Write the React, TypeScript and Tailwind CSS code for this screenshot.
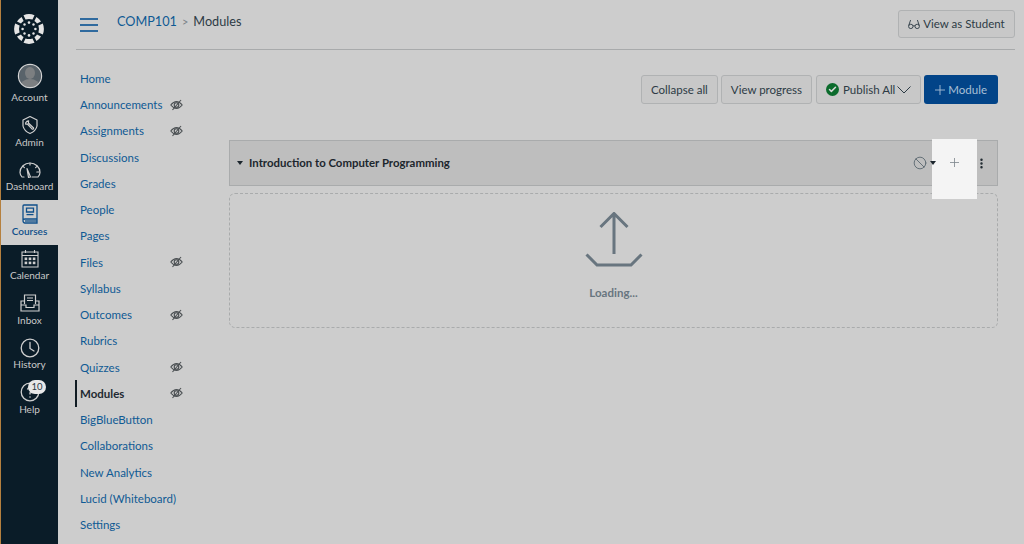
import { Ban, Check, EllipsisVertical } from "lucide-react";

const courseLinks = [
  { name: "Home" },
  { name: "Announcements", hidden: true },
  { name: "Assignments", hidden: true },
  { name: "Discussions" },
  { name: "Grades" },
  { name: "People" },
  { name: "Pages" },
  { name: "Files", hidden: true },
  { name: "Syllabus" },
  { name: "Outcomes", hidden: true },
  { name: "Rubrics" },
  { name: "Quizzes", hidden: true },
  { name: "Modules", hidden: true, active: true },
  { name: "BigBlueButton" },
  { name: "Collaborations" },
  { name: "New Analytics" },
  { name: "Lucid (Whiteboard)" },
  { name: "Settings" },
];

const CanvasLogo = () => (
  <svg width="32" height="32" viewBox="0 0 32 32" fill="#e4e4e4">
    <path d="M10.5 2.2 Q16 0 21.5 2.2 L19.5 6.6 Q16 5.4 12.5 6.6 Z" />
    <path d="M10.5 29.8 Q16 32 21.5 29.8 L19.5 25.4 Q16 26.6 12.5 25.4 Z" />
    <path d="M2.2 10.5 Q0 16 2.2 21.5 L6.6 19.5 Q5.4 16 6.6 12.5 Z" />
    <path d="M29.8 10.5 Q32 16 29.8 21.5 L25.4 19.5 Q26.6 16 25.4 12.5 Z" />
    <path d="M4 8.6 Q5.6 5.8 8.6 4 L10.6 8 Q8.8 9 8 10.6 Z" />
    <path d="M28 8.6 Q26.4 5.8 23.4 4 L21.4 8 Q23.2 9 24 10.6 Z" />
    <path d="M4 23.4 Q5.6 26.2 8.6 28 L10.6 24 Q8.8 23 8 21.4 Z" />
    <path d="M28 23.4 Q26.4 26.2 23.4 28 L21.4 24 Q23.2 23 24 21.4 Z" />
    <circle cx="16" cy="9.6" r="1.3" />
    <circle cx="16" cy="22.4" r="1.3" />
    <circle cx="9.6" cy="16" r="1.3" />
    <circle cx="22.4" cy="16" r="1.3" />
    <circle cx="11.5" cy="11.5" r="1.2" />
    <circle cx="20.5" cy="11.5" r="1.2" />
    <circle cx="11.5" cy="20.5" r="1.2" />
    <circle cx="20.5" cy="20.5" r="1.2" />
  </svg>
);

const AccountIcon = () => (
  <svg width="26" height="26" viewBox="0 0 26 26" className="shrink-0 mb-[10px]">
    <defs>
      <clipPath id="avatar">
        <circle cx="13" cy="13" r="11" />
      </clipPath>
    </defs>
    <circle cx="13" cy="13" r="11" fill="#59636a" />
    <g clipPath="url(#avatar)" fill="#7c7f81">
      <ellipse cx="13" cy="10" rx="5" ry="6" />
      <ellipse cx="13" cy="24" rx="10" ry="8" />
    </g>
    <circle cx="13" cy="13" r="11.6" fill="none" stroke="#d4d4d4" strokeWidth="1.2" />
  </svg>
);

const AdminIcon = () => (
  <svg width="20" height="20" viewBox="0 0 20 20" fill="none" stroke="#cfcfcf" strokeWidth="1.2" strokeLinejoin="round" className="shrink-0">
    <path d="M10 1.5 L17 5 V11 Q16 16 10 18.5 Q4 16 3 11 V5 Z" />
    <path d="M6.8 6.4 L8.6 5.8 L8.4 8 L13.6 13 Q13.6 14.4 12.2 14.2 L7.4 9 L5.6 9.2 Q5.2 7.4 6.8 6.4 Z" />
  </svg>
);

const DashboardIcon = () => (
  <svg width="22" height="16" viewBox="0 0 22 16" fill="none" stroke="#cfcfcf" strokeWidth="1.2" strokeLinecap="round" className="shrink-0">
    <path d="M5 15 H3 Q1 12.5 1 10.5 A10 9.5 0 0 1 21 10.5 Q21 12.5 19 15 H13" />
    <path d="M8 6.5 L11.5 15 L9.5 15.3 Z" strokeLinejoin="round" />
    <path d="M11 1.2 V3 M4 4.4 L5.4 5.6 M18 4.4 L16.6 5.6 M17.8 10 H20" />
  </svg>
);

const CoursesIcon = () => (
  <svg width="16" height="20" viewBox="0 0 16 20" fill="none" stroke="#0f4f8a" strokeWidth="1.3" className="shrink-0">
    <path d="M1 16.5 V2 Q1 1 2 1 H15 V15 H3 Q1 15 1 16.5 Q1 19 3 19 H15 V15" />
    <path d="M4.5 4.2 H11.5 V8 H4.5 Z" />
    <path d="M4.5 10.6 H11.5" />
    <path d="M3 17 H15" />
  </svg>
);

const CalendarIcon = () => (
  <svg width="18" height="19" viewBox="0 0 18 19" fill="none" stroke="#cfcfcf" strokeWidth="1.1" className="shrink-0">
    <path d="M1 3 H17 V18 H1 Z M1 6.5 H17 M4.5 1 V4 M13.5 1 V4" />
    <g fill="#cfcfcf" stroke="none">
      <rect x="3.6" y="8.5" width="2.6" height="2.6" />
      <rect x="7.7" y="8.5" width="2.6" height="2.6" />
      <rect x="11.8" y="8.5" width="2.6" height="2.6" />
      <rect x="3.6" y="12.6" width="2.6" height="2.6" />
      <rect x="7.7" y="12.6" width="2.6" height="2.6" />
      <rect x="11.8" y="12.6" width="2.6" height="2.6" />
    </g>
  </svg>
);

const InboxIcon = () => (
  <svg width="20" height="18" viewBox="0 0 20 18" fill="none" stroke="#cfcfcf" strokeWidth="1.2" className="shrink-0">
    <path d="M4.5 10 V1 H15.5 V10" />
    <path d="M7 4 H13 M7 6.5 H13" />
    <path d="M4.5 7 H1 V17 H19 V7 H15.5" />
    <path d="M1 11 H6 V13.5 H14 V11 H19" />
  </svg>
);

const HistoryIcon = () => (
  <svg width="20" height="20" viewBox="0 0 20 20" fill="none" stroke="#cfcfcf" strokeWidth="1.3" strokeLinecap="round" className="shrink-0">
    <circle cx="10" cy="10" r="8.8" />
    <path d="M10 4.5 V10.5 L14 13" />
  </svg>
);

const HelpIcon = () => (
  <svg width="20" height="20" viewBox="0 0 20 20" fill="none" stroke="#cfcfcf" strokeWidth="1.3" className="shrink-0">
    <circle cx="10" cy="10" r="8.8" />
    <path d="M7.4 7.5 A2.7 2.7 0 1 1 10 11 V12.5" />
    <circle cx="10" cy="15" r="0.8" fill="#cfcfcf" stroke="none" />
  </svg>
);

const EyeOffIcon = () => (
  <svg width="13" height="12" viewBox="0 0 13 12" fill="none" stroke="#4a4f52" strokeWidth="1.1" className="shrink-0">
    <path d="M0.8 6 Q3.5 2.6 6.5 2.6 Q9.5 2.6 12.2 6 Q9.5 9.4 6.5 9.4 Q3.5 9.4 0.8 6 Z" />
    <circle cx="6.5" cy="6" r="2.3" />
    <path d="M2.5 11 L11 1" />
  </svg>
);

const GlassesIcon = () => (
  <svg width="12" height="11" viewBox="0 0 12 11" fill="none" stroke="#2d3b45" strokeWidth="0.9">
    <circle cx="2.8" cy="7.4" r="2.2" />
    <circle cx="9.2" cy="7.4" r="2.2" />
    <path d="M5 7 Q6 6.4 7 7 M0.7 6.6 L2.6 1 M11.3 6.6 L9.4 1" />
  </svg>
);

const UploadIcon = () => (
  <svg width="58" height="56" viewBox="0 0 58 56" fill="none" stroke="#68757f" strokeWidth="3">
    <path d="M29 1.5 V42 M15.5 15 L29 1.5 L42.5 15" />
    <path d="M1.5 42.5 L12 53 H46 L56.5 42.5" />
  </svg>
);

const PlusIcon = ({ size, color }: { size: number; color: string }) => (
  <svg width={size} height={size} viewBox="0 0 10 10" fill="none" stroke={color} strokeWidth="0.9">
    <path d="M5 0 V10 M0 5 H10" />
  </svg>
);

const RailItem = ({ label, icon, active }: { label: string; icon: React.ReactNode; active?: boolean }) => (
  <div
    className={`h-[44.5px] flex flex-col items-center justify-end pb-[6px] ${
      active ? "bg-[#cdcdcd] text-[#0f4f8a] font-semibold" : "text-[#c9c9c9]"
    }`}
  >
    <div className="h-[19px] flex items-center justify-center">{icon}</div>
    <span className="text-[10px] leading-[15px]">{label}</span>
  </div>
);

const ToolButton = ({ children }: { children: React.ReactNode }) => (
  <button className="h-[29px] px-[9px] flex items-center bg-[#c8c8c8] border border-[#b0b2b3] rounded-[3px] text-[11.5px] text-[#2d3b45]">
    {children}
  </button>
);

const App = () => {
  return (
    <div className="w-[1024px] h-[544px] overflow-hidden flex bg-[#cdcdcd] font-['Lato','Open_Sans',sans-serif]">
      {/* global nav */}
      <nav className="w-[58px] shrink-0 bg-[#0a1c28] border-l border-[#b5803f] pt-[13px]">
        <div className="flex justify-center mb-[21.5px] pr-[1px]">
          <CanvasLogo />
        </div>
        <RailItem label="Account" icon={<AccountIcon />} />
        <RailItem label="Admin" icon={<AdminIcon />} />
        <RailItem label="Dashboard" icon={<DashboardIcon />} />
        <RailItem label="Courses" active icon={<CoursesIcon />} />
        <RailItem label="Calendar" icon={<CalendarIcon />} />
        <RailItem label="Inbox" icon={<InboxIcon />} />
        <RailItem label="History" icon={<HistoryIcon />} />
        <div className="relative">
          <RailItem label="Help" icon={<HelpIcon />} />
          <span className="absolute left-[27px] top-[2px] h-[14px] w-[18px] rounded-full bg-[#e8e8e8] text-[9.5px] leading-[14px] text-center text-[#2d3b45]">
            10
          </span>
        </div>
      </nav>

      <div className="flex-1 min-w-0 flex flex-col pl-[18px] pr-[9px]">
        {/* breadcrumb header */}
        <header className="h-[50px] shrink-0 border-b border-[#a8aaab] flex items-center pl-[4px]">
          <div className="w-[18px] flex flex-col gap-[4px]">
            <div className="h-[2px] bg-[#2f6a9e]" />
            <div className="h-[2px] bg-[#2f6a9e]" />
            <div className="h-[2px] bg-[#2f6a9e]" />
          </div>
          <span className="ml-[19px] text-[12.7px] text-[#0f5a94] -mt-[5px]">COMP101</span>
          <span className="mx-[5px] text-[11px] text-[#7a8288] -mt-[5px]">&gt;</span>
          <span className="text-[12.7px] text-[#2d3b45] -mt-[5px]">Modules</span>
          <button className="ml-auto -mt-[1px] h-[28px] w-[117px] flex items-center justify-center gap-[3px] bg-[#c8c8c8] border border-[#b0b2b3] rounded-[3px] text-[11.5px] text-[#2d3b45]">
            <GlassesIcon />
            View as Student
          </button>
        </header>

        <div className="flex-1 flex min-h-0">
          {/* course nav */}
          <ul className="w-[153px] shrink-0 pt-[15.5px] text-[11.5px]">
            {courseLinks.map((link) => (
              <li
                key={link.name}
                className={`h-[26.24px] flex items-center ${
                  link.active
                    ? "-ml-[1px] border-l-2 border-[#111c24] pl-[3px] font-bold text-[#1f2a32]"
                    : "pl-[4px] text-[#0f5a94]"
                }`}
              >
                <span>{link.name}</span>
                {link.hidden && (
                  <span className="ml-auto mr-[46px]">
                    <EyeOffIcon />
                  </span>
                )}
              </li>
            ))}
          </ul>

          {/* modules */}
          <main className="flex-1 min-w-0 relative pr-[17px]">
            <div className="flex justify-end gap-[3px] pt-[25px] items-center">
              <ToolButton>Collapse all</ToolButton>
              <ToolButton>View progress</ToolButton>
              <div className="ml-[1px]">
                <ToolButton>
                  <span className="w-[13px] h-[13px] rounded-full bg-[#0b6b2c] flex items-center justify-center mr-[4px]">
                    <Check size={9} strokeWidth={4} color="#d8d8d8" />
                  </span>
                  Publish All
                  <svg width="14" height="8" viewBox="0 0 14 8" fill="none" stroke="#2d3b45" strokeWidth="1" className="ml-[2px]">
                    <path d="M0.5 0.5 L7 7 L13.5 0.5" />
                  </svg>
                </ToolButton>
              </div>
              <button className="h-[29px] px-[11px] flex items-center gap-[3px] bg-[#024488] rounded-[3px] text-[11.5px] text-[#a9c0d6]">
                <PlusIcon size={10} color="#a9c0d6" />
                Module
              </button>
            </div>

            <div className="mt-[36px] h-[46px] bg-[#bebebe] border border-[#a9abac] flex items-center pl-[7px] pr-[9.5px] text-[#1c262d]">
              <span className="w-0 h-0 border-x-[3px] border-x-transparent border-t-[4px] border-t-[#1c262d] mr-[6px]" />
              <span className="text-[11.4px] font-bold">Introduction to Computer Programming</span>
              <div className="ml-auto flex items-center">
                <Ban size={14} strokeWidth={1.6} color="#5e6a72" />
                <span className="relative z-10 ml-[3px] w-0 h-0 border-x-[3px] border-x-transparent border-t-[4px] border-t-[#1c262d]" />
                <span className="w-[38.5px]" />
                <EllipsisVertical size={13} strokeWidth={2.5} color="#1c262d" />
              </div>
            </div>

            <div className="mt-[7px] h-[135px] border border-dashed border-[#a9abac] rounded-[6px] flex flex-col items-center pt-[18px]">
              <UploadIcon />
              <span className="mt-[16px] text-[11.5px] font-bold text-[#68757f]">Loading...</span>
            </div>

            {/* highlight spot */}
            <div className="absolute left-[703px] top-[89px] w-[45px] h-[60px] bg-[#f4f4f4] flex items-start justify-center pt-[19px]">
              <PlusIcon size={9} color="#7d868c" />
            </div>
          </main>
        </div>
      </div>
    </div>
  );
};

export default App;
